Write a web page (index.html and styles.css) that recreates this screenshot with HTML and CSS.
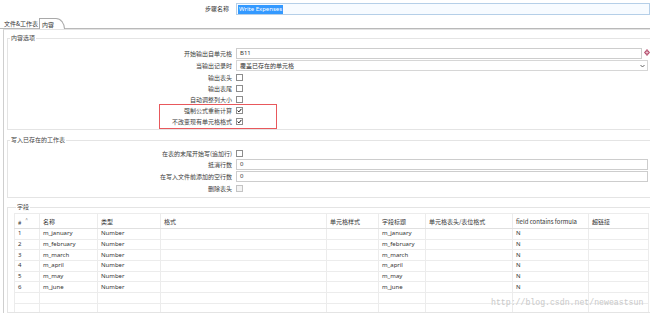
FILE: index.html
```html
<!DOCTYPE html>
<html lang="en">
<head>
    <meta charset="UTF-8">
    <title>Excel Writer - 内容</title>
    <link rel="stylesheet" href="styles.css">
</head>
<body>
    <div class="step-row">
        <div class="step-label">步骤名称</div>
        <div class="step-input"><span class="selected">Write Expenses</span></div>
    </div>

    <div class="tabs">
        <div class="tab">文件&amp;工作表</div>
        <div class="tab active">内容</div>
    </div>

    <div class="panel">
        <fieldset class="group group-content">
            <legend>内容选项</legend>
            <div class="row">
                <div class="label">开始输出自单元格</div>
                <div class="field short">B11</div>
                <svg class="var-icon" width="6" height="7" viewBox="0 0 6 7"><path d="M3 0 L6 3.5 L3 7 L0 3.5 Z" fill="#b34a6a"/><path d="M3 1.5 V5.5 M1.5 3.5 H4.5" stroke="#f3d6de" stroke-width="0.8"/></svg>
            </div>
            <div class="row">
                <div class="label">当输出记录时</div>
                <div class="field select">覆盖已存在的单元格
                    <svg class="chev" width="5" height="4" viewBox="0 0 5 4"><path d="M0.5 1 L2.5 3 L4.5 1" fill="none" stroke="#555" stroke-width="0.9"/></svg>
                </div>
            </div>
            <div class="row check-row">
                <div class="label">输出表头</div>
                <span class="box"></span>
            </div>
            <div class="row check-row">
                <div class="label">输出表尾</div>
                <span class="box"></span>
            </div>
            <div class="row check-row">
                <div class="label">自动调整列大小</div>
                <span class="box"></span>
            </div>
            <div class="marked">
                <div class="row check-row">
                    <div class="label">强制公式重新计算</div>
                    <span class="box checked"><svg width="5" height="5" viewBox="0 0 5 5"><path d="M0.6 2.6 L1.9 3.9 L4.4 0.9" fill="none" stroke="#111" stroke-width="1"/></svg></span>
                </div>
                <div class="row check-row">
                    <div class="label">不改变现有单元格格式</div>
                    <span class="box checked"><svg width="5" height="5" viewBox="0 0 5 5"><path d="M0.6 2.6 L1.9 3.9 L4.4 0.9" fill="none" stroke="#111" stroke-width="1"/></svg></span>
                </div>
            </div>
        </fieldset>

        <fieldset class="group group-existing">
            <legend>写入已存在的工作表</legend>
            <div class="row check-row">
                <div class="label">在表的末尾开始写(追加行)</div>
                <span class="box"></span>
            </div>
            <div class="row">
                <div class="label">抵消行数</div>
                <div class="field">0</div>
            </div>
            <div class="row">
                <div class="label">在写入文件前添加的空行数</div>
                <div class="field">0</div>
            </div>
            <div class="row check-row">
                <div class="label">删除表头</div>
                <span class="box disabled"></span>
            </div>
        </fieldset>

        <fieldset class="group group-fields">
            <legend>字段</legend>
            <table class="grid">
                <colgroup>
                    <col style="width:25px">
                    <col style="width:58px">
                    <col style="width:63px">
                    <col style="width:166px">
                    <col style="width:52px">
                    <col style="width:47px">
                    <col style="width:87px">
                    <col style="width:76px">
                    <col style="width:60px">
                </colgroup>
                <thead>
                    <tr>
                        <th>#<span class="sort">^</span></th>
                        <th>名称</th>
                        <th>类型</th>
                        <th>格式</th>
                        <th>单元格样式</th>
                        <th>字段标题</th>
                        <th>单元格表头/表位格式</th>
                        <th>field contains formula</th>
                        <th>超链接</th>
                    </tr>
                </thead>
                <tbody>
                    <tr><td>1</td><td>m_january</td><td>Number</td><td></td><td></td><td>m_january</td><td></td><td>N</td><td></td></tr>
                    <tr><td>2</td><td>m_february</td><td>Number</td><td></td><td></td><td>m_february</td><td></td><td>N</td><td></td></tr>
                    <tr><td>3</td><td>m_march</td><td>Number</td><td></td><td></td><td>m_march</td><td></td><td>N</td><td></td></tr>
                    <tr><td>4</td><td>m_april</td><td>Number</td><td></td><td></td><td>m_april</td><td></td><td>N</td><td></td></tr>
                    <tr><td>5</td><td>m_may</td><td>Number</td><td></td><td></td><td>m_may</td><td></td><td>N</td><td></td></tr>
                    <tr><td>6</td><td>m_june</td><td>Number</td><td></td><td></td><td>m_june</td><td></td><td>N</td><td></td></tr>
                    <tr><td></td><td></td><td></td><td></td><td></td><td></td><td></td><td></td><td></td></tr>
                    <tr><td></td><td></td><td></td><td></td><td></td><td></td><td></td><td></td><td></td></tr>
                </tbody>
            </table>
            <div class="watermark">http://blog.csdn.net/neweastsun</div>
        </fieldset>
    </div>
</body>
</html>
```

FILE: styles.css
```css
* { margin: 0; padding: 0; box-sizing: border-box; }
html, body { width: 650px; height: 313px; overflow: hidden; }
body {
    font-family: 'Noto Sans CJK SC', 'Noto Sans', sans-serif;
    font-size: 6px;
    color: #333;
    background: #fff;
}

/* step name */
.step-row {
    display: flex;
    align-items: center;
    height: 12px;
    margin-top: 3px;
}
.step-label { width: 229px; text-align: right; line-height: 12px; }
.step-input {
    margin-left: 7px;
    flex: 1;
    height: 12px;
    border: 1px solid #b5cfe8;
    background: #f7fbff;
    padding-left: 1px;
    display: flex;
    align-items: center;
}
.selected {
    background: #3399ff;
    color: #fff;
    line-height: 9px;
    padding: 0 1px;
    font-family: 'Noto Sans', sans-serif;
}

/* tabs */
.tabs {
    display: flex;
    align-items: flex-end;
    height: 12px;
    margin-top: 2px;
    padding-left: 3px;
    border-bottom: 1px solid #b9b9b9;
}
.tab { line-height: 9px; padding: 0 1px; }
.tab.active {
    position: relative;
    top: 1px;
    height: 11px;
    padding: 1px 10px 0 2px;
    border: 1px solid #a9a9a9;
    border-bottom: none;
    border-top-right-radius: 9px 11px;
    background: #fff;
}

/* panel */
.panel {
    margin-left: 3px;
    border-left: 1px solid #cfcfcf;
    border-top: 1px solid #e3e3e3;
    padding: 4px 0 0 3px;
    height: 284px;
}
.group {
    border: 1px solid #e4e4e4;
    border-right: none;
    padding: 0;
    margin-bottom: 5px;
    position: relative;
}
.group legend {
    margin-left: 2px;
    padding: 0 1px;
    line-height: 8px;
    color: #444;
}
.group-content { padding: 6px 0 2px 0; margin-bottom: 6px; }
.group-existing { padding: 4px 0 3px 0; }
.group-fields { padding: 2px 0 0 6px; height: 110px; overflow: hidden; margin-bottom: 0; }

/* form rows */
.row {
    display: flex;
    align-items: center;
    height: 11px;
    margin-bottom: 1px;
}
.check-row { margin-bottom: 0; }
.label {
    width: 228px;
    text-align: right;
    color: #3a3a3a;
    padding-right: 4px;
    white-space: nowrap;
}
.field {
    flex: 1;
    height: 11px;
    border: 1px solid #cdcdcd;
    background: #fff;
    padding-left: 3px;
    line-height: 9px;
    font-family: 'Noto Sans', 'Noto Sans CJK SC', sans-serif;
    margin-right: 2px;
}
.field.short { margin-right: 0; }
.var-icon { margin: 0 0 2px 2px; flex: none; }
.field.select {
    display: flex;
    align-items: center;
    justify-content: space-between;
    padding-right: 2px;
    border-color: #d6d6d6;
    font-family: 'Noto Sans CJK SC', sans-serif;
}
.box {
    width: 7px;
    height: 7px;
    border: 1px solid #8d8d8d;
    background: #fff;
    display: flex;
    align-items: center;
    justify-content: center;
}
.box.disabled { border-color: #c4c4c4; background: #f4f4f4; }

.marked { position: relative; }
.marked::after {
    content: '';
    position: absolute;
    left: 151px;
    top: -1px;
    width: 116px;
    height: 23px;
    border: 1px solid #e8585c;
}

/* fields table */
.grid {
    border-collapse: collapse;
    table-layout: fixed;
    width: 634px;
    border: 1px solid #c9c9c9;
    font-family: 'Noto Sans', 'Noto Sans CJK SC', sans-serif;
    color: #333;
}
.grid th, .grid td {
    border: 1px solid #ececec;
    text-align: left;
    padding: 0 3px;
    white-space: nowrap;
    overflow: hidden;
    font-weight: normal;
}
.grid th {
    height: 15px;
    font-family: 'Noto Sans CJK SC', 'Noto Sans', sans-serif;
    border-bottom-color: #e0e0e0;
}
.grid td { height: 10.7px; line-height: 9px; }
.sort { margin-left: 4px; color: #888; vertical-align: 3px; font-size: 5px; }

.watermark {
    position: absolute;
    left: 483px;
    top: 87px;
    font-family: 'Liberation Mono', monospace;
    font-size: 8.2px;
    color: #c9c9c9;
}
```
